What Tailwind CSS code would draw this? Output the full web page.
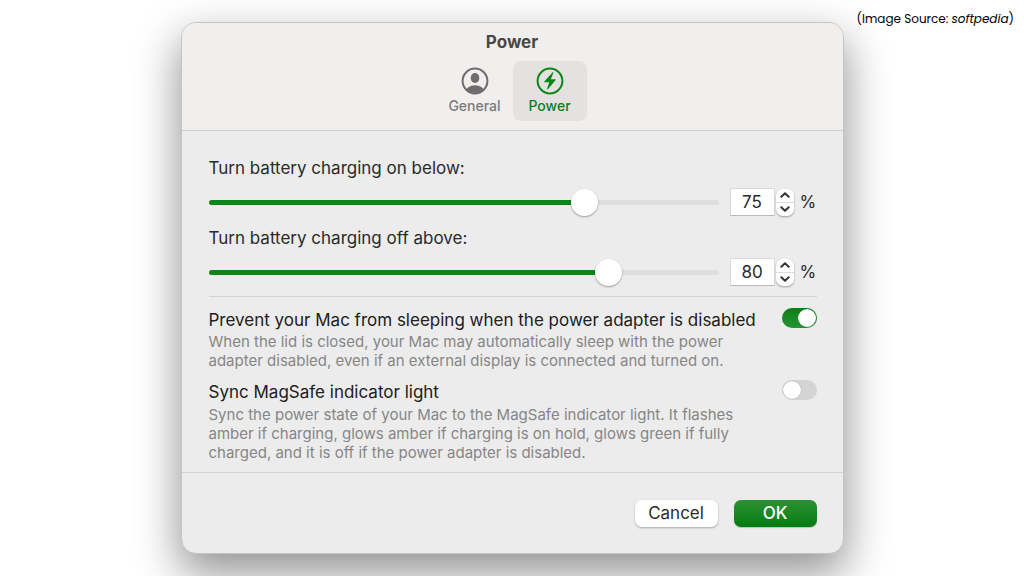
<!DOCTYPE html>
<html lang="en">
<head>
<meta charset="utf-8">
<meta name="viewport" content="width=device-width, initial-scale=1">
<title>Power</title>
<script src="https://cdn.jsdelivr.net/npm/@tailwindcss/browser@4"></script>
</head>
<body class="relative min-h-screen overflow-hidden bg-white font-['Inter',sans-serif] text-[#2a2a2a]">
<p class="absolute top-[9px] right-[10px] font-[Poppins,Inter,sans-serif] text-[12px] leading-5 text-black">(Image Source: <em>softpedia</em>)</p>
<main class="flex justify-center px-4 pt-[22px] pb-[22px]">
  <form class="w-full max-w-[663px] overflow-hidden rounded-[15px] border border-[#c4c4c4] bg-[#ececec] shadow-[0_18px_44px_2px_rgba(0,0,0,0.42)]">
    <header class="flex flex-col items-center border-b border-[#cfcfcf] bg-[#f0efee] pt-[7px] pb-[9px]">
      <h1 class="text-[17px] leading-6 font-bold text-[#484848]">Power</h1>
      <nav class="mt-[7px] flex gap-px">
        <button type="button" class="flex h-[60px] w-[74px] flex-col items-center rounded-lg pt-[6px] text-[14px] font-medium text-[#7b7b7b]">
          <svg class="size-7" viewBox="0 0 28 28" aria-hidden="true">
            <defs><clipPath id="face"><circle cx="14" cy="14" r="12"/></clipPath></defs>
            <circle cx="14" cy="14" r="12.4" fill="none" stroke="#6e6c6c" stroke-width="2"/>
            <g clip-path="url(#face)" fill="#6e6c6c"><ellipse cx="14" cy="11" rx="4.3" ry="4.9"/><ellipse cx="14" cy="24.5" rx="9" ry="6.2"/></g>
          </svg>
          <span class="mt-px leading-5">General</span>
        </button>
        <button type="button" class="flex h-[60px] w-[74px] flex-col items-center rounded-lg bg-[#e3e2e1] pt-[6px] text-[14px] font-medium text-[#0b7f16]">
          <svg class="size-7" viewBox="0 0 28 28" aria-hidden="true">
            <circle cx="14" cy="14" r="12.4" fill="none" stroke="#0b8617" stroke-width="2"/>
            <path d="M16.6 5.3 8.3 14.5q-.5.8.4.8h4.6l-2.2 6.5q-.2 1.3.8.5l7.8-9.2q.5-.8-.4-.8h-4.4l2.4-6.4q.2-1.3-.7-.6Z" fill="#0b8617"/>
          </svg>
          <span class="mt-px leading-5">Power</span>
        </button>
      </nav>
    </header>

    <div class="pt-[25px] pr-[26px] pl-[27px]">
      <div>
        <label for="below" class="block text-[17px] leading-6">Turn battery charging on below:</label>
        <div class="mt-2 flex h-7 items-center">
          <input id="below" type="range" min="0" max="100" value="75" style="--v:75%" class="h-[5px] min-w-0 flex-1 appearance-none rounded-full bg-[linear-gradient(to_right,#0c8616_var(--v),#dedede_var(--v))] [&::-webkit-slider-thumb]:size-[27px] [&::-webkit-slider-thumb]:appearance-none [&::-webkit-slider-thumb]:rounded-full [&::-webkit-slider-thumb]:bg-white [&::-webkit-slider-thumb]:shadow-[0_1px_2px_rgba(0,0,0,0.35)]">
          <input type="text" value="75" aria-label="Charging on below, percent" class="ml-[11px] h-7 w-[45px] border border-[#dadada] border-b-[#b8b8b8] bg-white text-center text-[17px]">
          <div class="ml-px flex h-[27px] w-[18px] flex-col divide-y divide-[#dcdcdc] overflow-hidden rounded-[7px] bg-white shadow-[0_1px_2px_rgba(0,0,0,0.35)]">
            <button type="button" aria-label="Increase" class="flex flex-1 items-center justify-center"><svg class="h-[6px] w-[10px]" viewBox="0 0 10 6" fill="none" stroke="#333" stroke-width="2" stroke-linecap="round" stroke-linejoin="round"><path d="M1.3 4.8 5 1.3l3.7 3.5"/></svg></button>
            <button type="button" aria-label="Decrease" class="flex flex-1 items-center justify-center"><svg class="h-[6px] w-[10px]" viewBox="0 0 10 6" fill="none" stroke="#333" stroke-width="2" stroke-linecap="round" stroke-linejoin="round"><path d="M1.3 1.3 5 4.8l3.7-3.5"/></svg></button>
          </div>
          <span class="w-[23px] pt-[2px] pl-[6px] text-[17px]">%</span>
        </div>
      </div>
      <div class="mt-[10px]">
        <label for="above" class="block text-[17px] leading-6">Turn battery charging off above:</label>
        <div class="mt-2 flex h-7 items-center">
          <input id="above" type="range" min="0" max="100" value="80" style="--v:80%" class="h-[5px] min-w-0 flex-1 appearance-none rounded-full bg-[linear-gradient(to_right,#0c8616_var(--v),#dedede_var(--v))] [&::-webkit-slider-thumb]:size-[27px] [&::-webkit-slider-thumb]:appearance-none [&::-webkit-slider-thumb]:rounded-full [&::-webkit-slider-thumb]:bg-white [&::-webkit-slider-thumb]:shadow-[0_1px_2px_rgba(0,0,0,0.35)]">
          <input type="text" value="80" aria-label="Charging off above, percent" class="ml-[11px] h-7 w-[45px] border border-[#dadada] border-b-[#b8b8b8] bg-white text-center text-[17px]">
          <div class="ml-px flex h-[27px] w-[18px] flex-col divide-y divide-[#dcdcdc] overflow-hidden rounded-[7px] bg-white shadow-[0_1px_2px_rgba(0,0,0,0.35)]">
            <button type="button" aria-label="Increase" class="flex flex-1 items-center justify-center"><svg class="h-[6px] w-[10px]" viewBox="0 0 10 6" fill="none" stroke="#333" stroke-width="2" stroke-linecap="round" stroke-linejoin="round"><path d="M1.3 4.8 5 1.3l3.7 3.5"/></svg></button>
            <button type="button" aria-label="Decrease" class="flex flex-1 items-center justify-center"><svg class="h-[6px] w-[10px]" viewBox="0 0 10 6" fill="none" stroke="#333" stroke-width="2" stroke-linecap="round" stroke-linejoin="round"><path d="M1.3 1.3 5 4.8l3.7-3.5"/></svg></button>
          </div>
          <span class="w-[23px] pt-[2px] pl-[6px] text-[17px]">%</span>
        </div>
      </div>
      <hr class="mt-[10px] border-[#d3d3d3]">
      <div class="mt-[11px] flex items-start justify-between">
        <div>
          <label for="awake" class="block text-[17px] leading-6 text-[#202020]">Prevent your Mac from sleeping when the power adapter is disabled</label>
          <p class="text-[15px] leading-[19px] text-[#868686]">When the lid is closed, your Mac may automatically sleep with the power<br>adapter disabled, even if an external display is connected and turned on.</p>
        </div>
        <input id="awake" type="checkbox" role="switch" checked class="flex h-5 w-[35px] shrink-0 appearance-none items-center rounded-full bg-[#d4d4d4] px-px before:size-[18px] before:rounded-full before:bg-white before:shadow-[0_0_1px_rgba(0,0,0,0.4)] checked:justify-end checked:bg-linear-to-b checked:from-[#0d7d17] checked:to-[#269632]">
      </div>
      <div class="mt-[10px] flex items-start justify-between">
        <div>
          <label for="sync" class="block text-[17px] leading-6 text-[#202020]">Sync MagSafe indicator light</label>
          <p class="mt-px text-[15px] leading-[19px] text-[#868686]">Sync the power state of your Mac to the MagSafe indicator light. It flashes<br>amber if charging, glows amber if charging is on hold, glows green if fully<br>charged, and it is off if the power adapter is disabled.</p>
        </div>
        <input id="sync" type="checkbox" role="switch" class="flex h-5 w-[35px] shrink-0 appearance-none items-center rounded-full bg-[#d4d4d4] px-px before:size-[18px] before:rounded-full before:bg-white before:shadow-[0_0_1px_rgba(0,0,0,0.4)] checked:justify-end checked:bg-linear-to-b checked:from-[#0d7d17] checked:to-[#269632]">
      </div>
    </div>
    <footer class="mt-[10px] flex justify-end gap-4 border-t border-[#d3d3d3] px-[26px] pt-[27px] pb-[26px]">
      <button type="button" class="h-[27px] w-[83px] rounded-[7px] bg-white text-[17px] leading-[27px] shadow-[0_1px_2px_rgba(0,0,0,0.3)]">Cancel</button>
      <button type="submit" class="h-[27px] w-[83px] rounded-[7px] bg-linear-to-b from-[#2a9233] to-[#037b0c] text-[17px] leading-[27px] font-medium text-white shadow-[0_1px_1px_rgba(0,0,0,0.2)]">OK</button>
    </footer>
  </form>
</main>
</body>
</html>
